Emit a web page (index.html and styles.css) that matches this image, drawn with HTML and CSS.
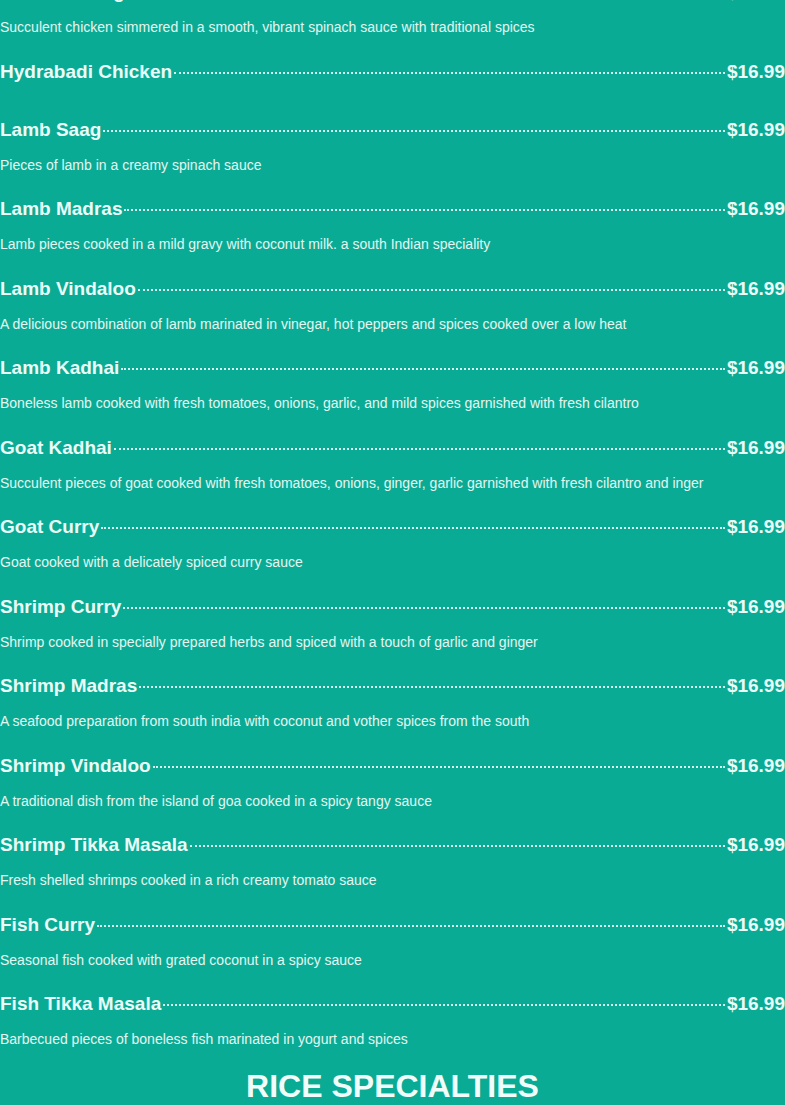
FILE: index.html
```html
<!DOCTYPE html>
<html>
<head>
<meta charset="utf-8">
<link rel="stylesheet" href="styles.css">
</head>
<body>
<div class="menu">
  <div class="item first">
    <div class="row"><span class="name">Chicken Saag</span><span class="leader"></span><span class="price">$16.99</span></div>
    <p class="desc">Succulent chicken simmered in a smooth, vibrant spinach sauce with traditional spices</p>
  </div>
  <div class="item nodesc">
    <div class="row"><span class="name">Hydrabadi Chicken</span><span class="leader"></span><span class="price">$16.99</span></div>
  </div>
  <div class="item">
    <div class="row"><span class="name">Lamb Saag</span><span class="leader"></span><span class="price">$16.99</span></div>
    <p class="desc">Pieces of lamb in a creamy spinach sauce</p>
  </div>
  <div class="item">
    <div class="row"><span class="name">Lamb Madras</span><span class="leader"></span><span class="price">$16.99</span></div>
    <p class="desc">Lamb pieces cooked in a mild gravy with coconut milk. a south Indian speciality</p>
  </div>
  <div class="item">
    <div class="row"><span class="name">Lamb Vindaloo</span><span class="leader"></span><span class="price">$16.99</span></div>
    <p class="desc">A delicious combination of lamb marinated in vinegar, hot peppers and spices cooked over a low heat</p>
  </div>
  <div class="item">
    <div class="row"><span class="name">Lamb Kadhai</span><span class="leader"></span><span class="price">$16.99</span></div>
    <p class="desc">Boneless lamb cooked with fresh tomatoes, onions, garlic, and mild spices garnished with fresh cilantro</p>
  </div>
  <div class="item">
    <div class="row"><span class="name">Goat Kadhai</span><span class="leader"></span><span class="price">$16.99</span></div>
    <p class="desc">Succulent pieces of goat cooked with fresh tomatoes, onions, ginger, garlic garnished with fresh cilantro and inger</p>
  </div>
  <div class="item">
    <div class="row"><span class="name">Goat Curry</span><span class="leader"></span><span class="price">$16.99</span></div>
    <p class="desc">Goat cooked with a delicately spiced curry sauce</p>
  </div>
  <div class="item">
    <div class="row"><span class="name">Shrimp Curry</span><span class="leader"></span><span class="price">$16.99</span></div>
    <p class="desc">Shrimp cooked in specially prepared herbs and spiced with a touch of garlic and ginger</p>
  </div>
  <div class="item">
    <div class="row"><span class="name">Shrimp Madras</span><span class="leader"></span><span class="price">$16.99</span></div>
    <p class="desc">A seafood preparation from south india with coconut and vother spices from the south</p>
  </div>
  <div class="item">
    <div class="row"><span class="name">Shrimp Vindaloo</span><span class="leader"></span><span class="price">$16.99</span></div>
    <p class="desc">A traditional dish from the island of goa cooked in a spicy tangy sauce</p>
  </div>
  <div class="item">
    <div class="row"><span class="name">Shrimp Tikka Masala</span><span class="leader"></span><span class="price">$16.99</span></div>
    <p class="desc">Fresh shelled shrimps cooked in a rich creamy tomato sauce</p>
  </div>
  <div class="item">
    <div class="row"><span class="name">Fish Curry</span><span class="leader"></span><span class="price">$16.99</span></div>
    <p class="desc">Seasonal fish cooked with grated coconut in a spicy sauce</p>
  </div>
  <div class="item">
    <div class="row"><span class="name">Fish Tikka Masala</span><span class="leader"></span><span class="price">$16.99</span></div>
    <p class="desc">Barbecued pieces of boneless fish marinated in yogurt and spices</p>
  </div>
  <h2 class="section">RICE SPECIALTIES</h2>
</div>
</body>
</html>
```

FILE: styles.css
```css
html, body {
  margin: 0;
  padding: 0;
  background: #0aab94;
}
body {
  font-family: "Liberation Sans", Arial, sans-serif;
  color: #e9fbf7;
  overflow: hidden;
}
.menu {
  width: 785px;
}
.item {
  padding-bottom: 23.5px;
}
.item.first {
  margin-top: -19px;
}
.item.nodesc {
  padding-bottom: 36px;
}
.row {
  display: flex;
  align-items: center;
  height: 22px;
}
.name, .price {
  font-size: 19px;
  font-weight: bold;
  line-height: 22px;
  white-space: nowrap;
  color: #eafcf8;
}
.leader {
  flex: 1;
  height: 0;
  border-top: 2px dotted rgba(235, 252, 248, 0.9);
  margin: 0 2px;
  position: relative;
  top: 1px;
}
.desc {
  margin: 14px 0 0;
  font-size: 14px;
  line-height: 20px;
  color: #e3f6f2;
}
.section {
  margin: 0;
  text-align: center;
  font-size: 32px;
  line-height: 27px;
  font-weight: bold;
  color: #f0fdfa;
}
```
